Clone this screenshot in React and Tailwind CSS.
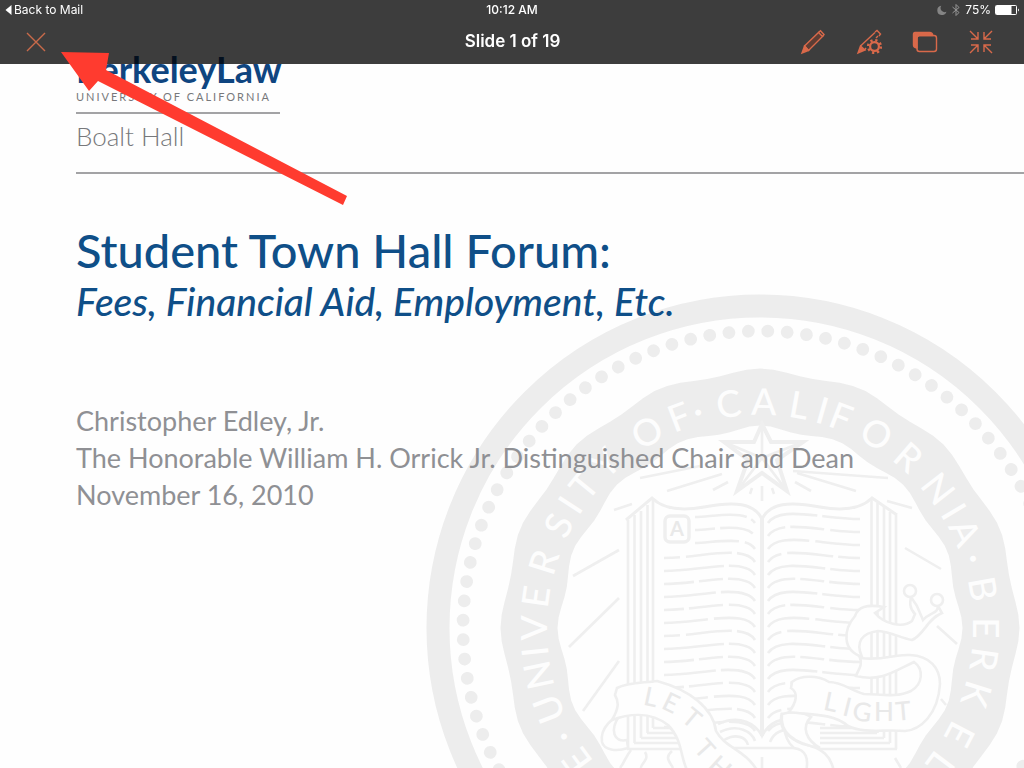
const SEAL = { x: 760, y: 628 };

const sealLetters = [
  ["C", -137], ["E", -126], ["·", -119], ["U", -111], ["N", -102], ["I", -96], ["V", -90],
  ["E", -82], ["R", -73], ["S", -63], ["I", -57], ["T", -51], ["Y", -43], ["O", -30],
  ["F", -21], ["·", -16], ["C", -8], ["A", 1], ["L", 10], ["I", 16], ["F", 21],
  ["O", 31], ["R", 41], ["N", 52], ["I", 59], ["A", 65], ["·", 72], ["B", 80],
  ["E", 90], ["R", 98], ["K", 107], ["E", 118], ["L", 127],
];

const dashes = ["52 5 60", "20 5 34 6 60", "44 6 60", "16 6 46 5 60", "60 5 60", "30 5 24 5 60"];

const rays = [
  "M573 576 619 550", "M569 647 619 598", "M583 711 619 661", "M614 510 632 504",
  "M640 478 700 466", "M667 491 722 474", "M713 490 728 482", "M905 548 941 569",
  "M937 626 957 644", "M941 699 946 705", "M895 758 901 768", "M887 501 912 508",
  "M793 471 888 478", "M797 473 856 491", "M795 482 811 491", "M762 486 762 501",
  "M752 488 750 494", "M772 488 774 494",
];

function wavyRing(radius, depth) {
  let d = "";
  for (let a = 0; a < 360; a += 3) {
    const t = (a * Math.PI) / 180;
    const r = radius + depth * Math.cos(16 * t);
    d += `${a ? "L" : "M"}${(SEAL.x + r * Math.cos(t)).toFixed(1)} ${(SEAL.y + r * Math.sin(t)).toFixed(1)}`;
  }
  return d + "Z";
}

function Seal() {
  const rows = Array.from({ length: 17 }, (_, i) => 519 + i * 13);
  const beads = Array.from({ length: 96 }, (_, i) => (i * 360) / 96);
  return (
    <svg
      aria-hidden="true"
      viewBox="420 288 680 680"
      className="pointer-events-none absolute top-[240px] left-[420px] size-[680px] fill-none stroke-[#ededed]"
    >
      <circle cx={SEAL.x} cy={SEAL.y} r="322" strokeWidth="23" />
      {beads.map((a) => (
        <circle key={a} cx={SEAL.x} cy={SEAL.y - 297} r="6.4" transform={`rotate(${a + 1.5} ${SEAL.x} ${SEAL.y})`} className="fill-[#ededed] stroke-none" />
      ))}
      <path d={wavyRing(257, 2.5) + wavyRing(200, 2.5)} fillRule="evenodd" className="fill-[#ededed] stroke-none" />
      <g className="fill-[#fdfdfd] stroke-none font-['Lato',sans-serif] text-[37px] font-medium" textAnchor="middle">
        {sealLetters.map(([ch, a]) => (
          <text key={a} x={SEAL.x} y={SEAL.y - 213} transform={`rotate(${a} ${SEAL.x} ${SEAL.y})`}>{ch}</text>
        ))}
      </g>

      <g strokeWidth="2.6" className="stroke-[#efefef]">
        {rays.map((d) => <path key={d} d={d} />)}
        <path d="M762 424 771 442 803 442 777 460 787 491 762 473 737 491 748 460 724 442 754 442Z" strokeWidth="4" />
        <path d="M762 424V458M803 442 762 458M787 491 762 458M737 491 762 458M724 442 762 458" />

        {/* open book */}
        <path d="M628 749V520M634.5 743V515M641 738V511M647.5 733V505M653 728V499M627 749H700M634 743H700M641 738H700M647 733H700M653 728H700" />
        <path d="M896 749V515M890 743V512M884 738V507M877.5 733V503M871.5 728V499M897 749H820M890 743H820M884 738H820M877 733H820M871 728H820" />
        <path d="M626 520 652 498C663 509 682 511 704 507C735 501 754 503 762 519C770 503 789 501 820 507C842 511 861 509 872 498L897 515" strokeWidth="3" />
        <path d="M762 518V736" strokeWidth="4" />
        {rows.map((y, i) => (
          <g key={y} strokeDasharray={dashes[i % dashes.length]}>
            <path d={i < 3 ? `M695 ${y - 2}C718 ${y - 3} 746 ${y - 9} 755 ${y + 4}` : `M664 ${y}C700 ${y} 744 ${y - 14} 755 ${y + 4}`} />
            <path d={`M768 ${y + 4}C780 ${y - 14} 822 ${y} 860 ${y}`} />
          </g>
        ))}
        <rect x="665" y="516" width="24" height="26" rx="5" strokeWidth="3.5" />
        <path d="M718 724C740 714 756 724 762 736C768 724 782 714 800 722M720 732C738 723 752 732 755 741M724 740C736 733 746 737 748 745M770 742C774 732 784 728 790 732M715 748H820M762 757V768" />
        <path d="M631 750C625 758 624 763 620 768M645 752C650 760 640 764 641 768M672 751C664 758 670 762 673 768" />

        {/* left scroll */}
        <g className="fill-[#fefefe]">
          <path d="M628 713C612 716 600 728 602 742C604 750 616 752 628 748L627 740C614 743 609 730 620 715Z" />
          <path d="M617 688C628 682 645 683 657 681C690 690 713 708 716 731C725 748 746 750 758 772H688C680 758 683 740 668 725C650 711 628 714 612 720C619 708 619 702 615 695Z" />
        </g>

        {/* right scroll with its tail */}
        <g className="fill-[#fefefe]">
          <path d="M782 713C778 726 786 738 803 744C823 748 831 756 834 772H806C809 758 806 750 794 748C789 744 784 738 782 713Z" />
          <path d="M782 714C792 711 804 712 811 717C801 727 806 740 820 748C798 744 779 735 782 714Z" />
          <path d="M862 657C842 650 843 630 855 616C858 607 866 604 884 607L875 613C883 623 902 629 912 621L915 614C909 608 910 602 911 597L917 606L923 620C930 612 938 614 938 606L942 613C927 619 924 635 912 640C900 638 892 632 878 631C862 633 855 642 862 657Z" />
          <circle cx="910" cy="591" r="6" />
          <circle cx="937" cy="600" r="6" />
          <path d="M792 682C800 675 818 675 829 682C842 682 850 690 864 694C880 694 896 698 911 691C923 684 924 669 914 662C893 672 880 682 856 676C858 670 863 665 860 658C885 661 892 654 910 655C930 656 940 668 940 684C938 715 920 730 905 731C885 729 865 734 848 726C833 713 810 715 789 712C796 703 799 693 791 688Z" />
        </g>
      </g>
      <g className="fill-[#e9e9e9] stroke-none font-['Lato',sans-serif] text-[26px] font-medium" textAnchor="middle">
        <text x="677" y="536" className="text-[20px] font-bold">A</text>
        <text transform="translate(649 706) rotate(12)">L</text>
        <text transform="translate(667 711) rotate(26)">E</text>
        <text transform="translate(686 725) rotate(40)">T</text>
        <text transform="translate(698 755) rotate(48)">T</text>
        <text transform="translate(714 774) rotate(42)">H</text>
        <text transform="translate(829 711) rotate(12)">L</text>
        <text transform="translate(845 716) rotate(14)">I</text>
        <text transform="translate(861 721) rotate(8)">G</text>
        <text transform="translate(884 721)">H</text>
        <text transform="translate(904 720) rotate(-5)">T</text>
      </g>
    </svg>
  );
}

function CloseIcon() {
  return (
    <svg viewBox="0 0 20 20" className="size-5 fill-none stroke-[#c96a4a] stroke-[1.4]">
      <path d="M1 1 19 19M19 1 1 19" />
    </svg>
  );
}

function PenIcon() {
  return (
    <svg viewBox="0 0 26 26" className="size-[26px] fill-none stroke-[#d9694a] stroke-[1.4]">
      <path d="M4.5 17 18.5 3.5 22.5 7.5 8.5 21.5Z" className="fill-[#5d3d34]" />
      <path d="M18.5 3.5 20.5 1.8 24 5.5 22.5 7.5" />
      <path d="M4.5 17 8.5 21.5 2 24Z" className="fill-[#d9694a]" />
    </svg>
  );
}

function PenSettingsIcon() {
  return (
    <svg viewBox="0 0 26 26" className="size-[26px] fill-none stroke-[#d9694a] stroke-[1.4]">
      <path d="M10 19 8.5 21M4.5 17 19 3.5M19 3 21 1.5 24.5 5 23 7M20 9 22 7" />
      <path d="M4.5 17 9 21 2 24Z" className="fill-[#d9694a]" />
      <circle cx="18.5" cy="17.5" r="4.4" strokeWidth="2.2" className="[stroke-width:2.2]" />
      <circle cx="18.5" cy="17.5" r="6.3" strokeDasharray="2.2 2.748" className="[stroke-width:2.6]" />
    </svg>
  );
}

function SlidesIcon() {
  return (
    <svg viewBox="0 0 26 22" className="h-[22px] w-[26px] fill-none stroke-[#d9694a] stroke-[1.4]">
      <path d="M3 1.5H17.5Q20.500 1.500 20.800 4.500H7.500Q5 4.500 5 7V17Q1.500 16.500 1.500 14V3.500Q1.500 1.500 3 1.500Z" className="fill-[#d9694a]" />
      <rect x="5" y="4.5" width="19.5" height="16" rx="2.5" />
    </svg>
  );
}

function ShrinkIcon() {
  return (
    <svg viewBox="0 0 24 24" className="size-6 fill-none stroke-[#d9694a] stroke-[1.4]">
      <path d="M1 1 9 9M9 2V9H2M23 1 15 9M15 2V9H22M1 23 9 15M2 15H9V22M23 23 15 15M22 15H15V22" />
    </svg>
  );
}

function ToolButton({ label, children }) {
  return (
    <button type="button" aria-label={label} className="flex h-11 w-14 items-center justify-center">
      {children}
    </button>
  );
}

function Header() {
  return (
    <header className="sticky top-0 z-10 h-16 shrink-0 bg-black/76 font-['Inter',sans-serif] text-white">
      <div className="grid h-5 grid-cols-3 items-center px-1 text-xs leading-5">
        <a href="#mail" className="flex items-center gap-0.5">
          <svg viewBox="0 0 8 12" className="h-3 w-2 fill-white"><path d="M7.5 1V11L1.5 6Z" /></svg>
          Back to Mail
        </a>
        <span className="text-center font-medium">10:12 AM</span>
        <span className="flex items-center justify-end gap-1">
          <svg viewBox="0 0 10 10" className="size-[10px] fill-[#858585]"><path d="M4.2.7A4.700 4.700 0 1 0 9.500 6.700 4.200 4.200 0 0 1 4.200.7Z" /></svg>
          <svg viewBox="0 0 10 14" className="h-[14px] w-[10px] fill-none stroke-[#959595]"><path d="M1.5 4 8 9.500 5 12.500V1.500L8 4.500 1.500 10" /></svg>
          <span>75%</span>
          <svg viewBox="0 0 25 10" className="h-[10px] w-[25px] fill-white">
            <rect x=".5" y=".5" width="21" height="9" rx="1" className="fill-none stroke-white" />
            <rect x="1" y="1" width="15.5" height="8" />
            <path d="M23 3.5Q25 5 23 6.500Z" />
          </svg>
        </span>
      </div>
      <div className="grid h-11 grid-cols-3 items-center pr-[15px] pl-2">
        <ToolButton label="Close"><CloseIcon /></ToolButton>
        <h1 className="pl-2 text-center text-[17px] font-semibold">Slide 1 of 19</h1>
        <div className="flex justify-end">
          <ToolButton label="Pen"><PenIcon /></ToolButton>
          <ToolButton label="Pen settings"><PenSettingsIcon /></ToolButton>
          <ToolButton label="Slides"><SlidesIcon /></ToolButton>
          <ToolButton label="Exit full screen"><ShrinkIcon /></ToolButton>
        </div>
      </div>
    </header>
  );
}

export default function App() {
  return (
    <div className="relative flex h-screen flex-col overflow-hidden bg-[#fefefe]">
      <Header />

      {/* the slide runs up underneath the translucent bar */}
      <main className="relative -mt-4 flex-1 pl-[76px] font-['Lato',sans-serif]">
        <Seal />
        <div className="relative">
          <div className="w-[204px] border-b-2 border-[#a3a3a5] pb-2">
            <p className="text-4xl leading-[42px] font-bold text-[#0f4580]">BerkeleyLaw</p>
            <p className="text-[11px] leading-[14px] tracking-[2px] whitespace-nowrap text-[#77787b]">UNIVERSITY OF CALIFORNIA</p>
          </div>
          <p className="pt-1 text-[26px] leading-9 font-light text-[#77787b]">Boalt Hall</p>
          <hr className="mt-[18px] border-t-2 border-[#a3a3a5]" />

          <h2 className="mt-12 text-[47px] leading-[56px] font-medium whitespace-nowrap text-[#0f4f88]">Student Town Hall Forum:</h2>
          <p className="text-[39px] leading-[46px] font-medium whitespace-nowrap text-[#0f4f88] italic">Fees, Financial Aid, Employment, Etc.</p>

          <div className="mt-[78px] text-[27px] leading-[37px] whitespace-nowrap text-[#8f9094]">
            <p>Christopher Edley, Jr.</p>
            <p>The Honorable William H. Orrick Jr. Distinguished Chair and Dean</p>
            <p>November 16, 2010</p>
          </div>
        </div>
      </main>

      <svg aria-hidden="true" viewBox="0 0 290 155" className="pointer-events-none absolute top-[50px] left-[60px] z-20 h-[155px] w-[290px] fill-[#ff3b2f]">
        <path d="M1 2 49 3 46 20 287 146 283 155 38 31 29 41Z" />
      </svg>
    </div>
  );
}
